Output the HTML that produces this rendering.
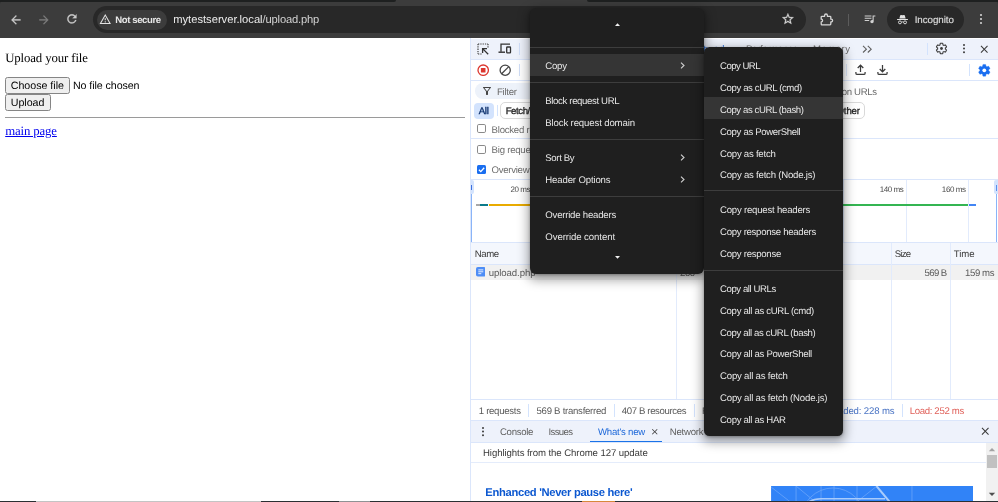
<!DOCTYPE html>
<html lang="en"><head><meta charset="utf-8"><title>upload.php</title>
<style>
html,body{margin:0;padding:0;width:998px;height:502px;overflow:hidden;background:#fff}
#r{position:relative;width:998px;height:502px;overflow:hidden;font-family:'Liberation Sans', sans-serif;text-rendering:geometricPrecision;will-change:transform}
#r div,#r span,#r svg,#r a{position:absolute;white-space:pre;box-sizing:border-box}
</style></head><body><div id="r" style="position:relative">
<div style="left:0px;top:0px;width:998px;height:502px;background:#ffffff;"></div>
<div style="left:0px;top:0px;width:998px;height:38.4px;background:#3c3c3c;"></div>
<div style="left:0px;top:0px;width:396px;height:1.6px;background:#1e2020;border-radius:0 0 2px 0;"></div>
<div style="left:587px;top:0px;width:411px;height:1.6px;background:#1e2020;border-radius:0 0 0 2px;"></div>
<svg style="left:0px;top:0px;" width="4" height="4" viewBox="0 0 4 4"><path d="M0 0H4Q0 0 0 4z" fill="#1e2020"/></svg>
<svg style="left:994px;top:0px;" width="4" height="4" viewBox="0 0 4 4"><path d="M4 0H0Q4 0 4 4z" fill="#1e2020"/></svg>
<div style="left:93px;top:6px;width:713px;height:27px;background:#282828;border-radius:13.5px;"></div>
<div style="left:97px;top:9.5px;width:70px;height:20px;background:#3c3c3c;border-radius:10px;"></div>
<svg style="left:9.299999999999999px;top:12.6px;" width="13.8" height="13.8" viewBox="0 0 24 24"><path d="M20 11H7.83l5.59-5.59L12 4l-8 8 8 8 1.41-1.41L7.83 13H20v-2z" fill="#cbcbcb" stroke="#cbcbcb" stroke-width="0.400"/></svg>
<svg style="left:37.300000000000004px;top:12.6px;" width="13.8" height="13.8" viewBox="0 0 24 24"><path d="M12 4l-1.41 1.41L16.17 11H4v2h12.17l-5.58 5.59L12 20l8-8z" fill="#7d7d7d" stroke="#7d7d7d" stroke-width="0.300"/></svg>
<svg style="left:65.39999999999999px;top:12.4px;" width="13.8" height="13.8" viewBox="0 0 24 24"><path d="M17.65 6.35C16.2 4.9 14.21 4 12 4c-4.42 0-7.99 3.58-7.99 8s3.57 8 7.99 8c3.73 0 6.84-2.55 7.73-6h-2.08c-.82 2.33-3.04 4-5.65 4-3.31 0-6-2.69-6-6s2.69-6 6-6c1.66 0 3.14.69 4.22 1.78L13 11h7V4l-2.35 2.35z" fill="#cbcbcb" stroke="#cbcbcb" stroke-width="0.400"/></svg>
<svg style="left:99.25px;top:12.75px;" width="12.5" height="12.5" viewBox="0 0 24 24"><path d="M12 5.99L19.53 19H4.47L12 5.99M12 2L1 21h22L12 2zm1 14h-2v2h2v-2zm0-6h-2v4h2v-4z" fill="#e3e3e3" /></svg>
<span style="left:115.20px;top:15.00px;font-family:'Liberation Sans', sans-serif;font-size:9.6px;line-height:12px;color:#e8e8e8;font-weight:700;letter-spacing:-0.399px;">Not secure</span>
<span style="left:173.20px;top:13.00px;font-family:'Liberation Sans', sans-serif;font-size:11.2px;line-height:15px;color:#ececec;letter-spacing:-0.008px;">mytestserver.local</span>
<span style="left:262.60px;top:13.00px;font-family:'Liberation Sans', sans-serif;font-size:11.2px;line-height:15px;color:#d2d2d2;letter-spacing:-0.188px;">/upload.php</span>
<svg style="left:781.1px;top:12.4px;" width="13.8" height="13.8" viewBox="0 0 24 24"><path d="M22 9.24l-7.19-.62L12 2 9.19 8.63 2 9.24l5.46 4.73L5.82 21 12 17.27 18.18 21l-1.63-7.03L22 9.24zM12 15.4l-3.76 2.27 1-4.28-3.32-2.88 4.38-.38L12 6.1l1.71 4.04 4.38.38-3.32 2.88 1 4.28L12 15.4z" fill="#d6d6d6" stroke="#d6d6d6" stroke-width="0.500"/></svg>
<svg style="left:820.3px;top:12.6px;" width="14" height="13" viewBox="0 0 14 13"><path d="M2 3.300H4.600V2.400a1.400 1.400 0 0 1 2.800 0V3.300H10a0.800 0.800 0 0 1 0.800 0.800V6.200h0.400a1.400 1.400 0 0 1 0 2.800h-0.400V11.100a0.800 0.800 0 0 1-0.800 0.800H2a0.800 0.800 0 0 1-0.800-0.800V9a1.400 1.400 0 0 0 0-2.800V4.100a0.800 0.800 0 0 1 0.800-0.800z" fill="none" stroke="#d6d6d6" stroke-width="1.300" stroke-linejoin="round"/></svg>
<div style="left:848px;top:14px;width:1px;height:12px;background:#5c5c5c;"></div>
<svg style="left:862.75px;top:12.25px;" width="13.5" height="13.5" viewBox="0 0 24 24"><path d="M15 6H3v2h12V6zm0 4H3v2h12v-2zM3 16h8v-2H3v2zM17 6v8.18c-.31-.11-.65-.18-1-.18-1.66 0-3 1.34-3 3s1.34 3 3 3 3-1.34 3-3V8h3V6h-5z" fill="#d0d0d0" /></svg>
<div style="left:887px;top:6px;width:76.5px;height:27px;background:#282828;border-radius:13.5px;"></div>
<svg style="left:895.5px;top:13px;" width="13" height="12" viewBox="0 0 24 22"><path d="M2 11.2h20v1.700H2zM6.200 10l1.500-5.600c.2-.7.900-1.100 1.600-.9l2.700.8 2.700-.8c.7-.2 1.400.2 1.600.9L17.800 10z" fill="#e3e3e3"/><circle cx="7.300" cy="17.200" r="2.700" fill="none" stroke="#e3e3e3" stroke-width="1.700"/><circle cx="16.700" cy="17.200" r="2.700" fill="none" stroke="#e3e3e3" stroke-width="1.700"/><path d="M10 16.800q2-1.200 4 0" fill="none" stroke="#e3e3e3" stroke-width="1.500"/></svg>
<span style="left:914.70px;top:14.00px;font-family:'Liberation Sans', sans-serif;font-size:9.8px;line-height:13px;color:#dedede;letter-spacing:-0.058px;-webkit-text-stroke:0.15px #dedede;">Incognito</span>
<svg style="left:977.8px;top:12px;" width="6" height="14" viewBox="0 0 6 14"><circle cx="3" cy="3" r="1.1" fill="#d0d0d0"/><circle cx="3" cy="7" r="1.1" fill="#d0d0d0"/><circle cx="3" cy="11" r="1.1" fill="#d0d0d0"/></svg>
<span style="left:5.20px;top:50.00px;font-family:'Liberation Serif', serif;font-size:12.8px;line-height:17px;color:#000;letter-spacing:-0.12px;">Upload your file</span>
<div style="left:5px;top:76.5px;width:65px;height:17px;background:#efefef;border:1px solid #858585;border-radius:2.500px;"></div>
<span style="left:10.70px;top:79.00px;font-family:'Liberation Sans', sans-serif;font-size:10.67px;line-height:14px;color:#000;letter-spacing:-0.001px;">Choose file</span>
<span style="left:73.00px;top:79.00px;font-family:'Liberation Sans', sans-serif;font-size:10.67px;line-height:14px;color:#000;letter-spacing:-0.079px;">No file chosen</span>
<div style="left:5px;top:93.500px;width:45.500px;height:17px;background:#efefef;border:1px solid #858585;border-radius:2.500px;"></div>
<span style="left:10.70px;top:96.00px;font-family:'Liberation Sans', sans-serif;font-size:10.67px;line-height:14px;color:#000;letter-spacing:0.004px;">Upload</span>
<div style="left:5px;top:116.5px;width:460px;height:1.2px;background:#9a9a9a;"></div>
<a style="left:5.20px;top:123.00px;font-family:'Liberation Serif', serif;font-size:12.8px;line-height:17px;color:#0000ee;letter-spacing:-0.144px;text-decoration:underline;">main page</a>
<div style="left:470px;top:38.4px;width:1px;height:463px;background:#dbe6fb;"></div>
<div style="left:471px;top:38.4px;width:527px;height:21.1px;background:#eef2fb;"></div>
<div style="left:470.5px;top:38.4px;width:527.5px;height:1.1px;background:#fdfdff;"></div>
<div style="left:471px;top:59.2px;width:527px;height:1px;background:#dbe6fb;"></div>
<svg style="left:477px;top:42.8px;" width="12" height="12" viewBox="0 0 12 12"><path d="M1 1h10M1 1v10M1 11h4M11 1v4" fill="none" stroke="#444" stroke-width="1.200" stroke-dasharray="1.300 1"/><path d="M11.200 11.200L5.600 5.600M5.600 10V5.600H10" fill="none" stroke="#333" stroke-width="1.300"/></svg>
<svg style="left:497.9px;top:43.3px;" width="14" height="11" viewBox="0 0 14 11"><path d="M3 8.800V1.200h9" fill="none" stroke="#333" stroke-width="1.300"/><path d="M0.500 9.200h6.500" fill="none" stroke="#333" stroke-width="1.400"/><rect x="8.700" y="4" width="3.800" height="5.800" rx="0.600" fill="none" stroke="#333" stroke-width="1.300"/></svg>
<div style="left:519px;top:43px;width:1px;height:12px;background:#d0def8;"></div>
<span style="left:536.00px;top:44.00px;font-family:'Liberation Sans', sans-serif;font-size:9.6px;line-height:12px;color:#6b6b6b;letter-spacing:-0.286px;">Elements</span>
<span style="left:590.00px;top:44.00px;font-family:'Liberation Sans', sans-serif;font-size:9.6px;line-height:12px;color:#6b6b6b;letter-spacing:-0.293px;">Console</span>
<span style="left:640.00px;top:44.00px;font-family:'Liberation Sans', sans-serif;font-size:9.6px;line-height:12px;color:#6b6b6b;letter-spacing:-0.293px;">Sources</span>
<span style="left:691.00px;top:44.00px;font-family:'Liberation Sans', sans-serif;font-size:9.6px;line-height:12px;color:#1a66d9;letter-spacing:0.135px;">Network</span>
<div style="left:685px;top:58px;width:48px;height:1.5px;background:#0b57d0;"></div>
<span style="left:746.00px;top:44.00px;font-family:'Liberation Sans', sans-serif;font-size:9.6px;line-height:12px;color:#6b6b6b;letter-spacing:-0.292px;">Performance</span>
<span style="left:813.00px;top:44.00px;font-family:'Liberation Sans', sans-serif;font-size:9.6px;line-height:12px;color:#6b6b6b;letter-spacing:0.469px;">Memory</span>
<svg style="left:862px;top:45px;" width="11" height="8.4" viewBox="0 0 11 8.400"><path d="M1 0.900l3.400 3.300L1 7.500M5.800 0.900l3.400 3.300-3.400 3.300" fill="none" stroke="#5f5f5f" stroke-width="1.100"/></svg>
<div style="left:927px;top:43px;width:1px;height:12px;background:#d3e3fd;"></div>
<svg style="left:935.2px;top:42.2px;" width="13" height="13" viewBox="0 0 24 24"><path d="M19.14 12.94c.04-.3.06-.61.06-.94 0-.32-.02-.64-.07-.94l2.03-1.58c.18-.14.23-.41.12-.61l-1.92-3.32c-.12-.22-.37-.29-.59-.22l-2.39.96c-.5-.38-1.03-.7-1.62-.94l-.36-2.54c-.04-.24-.24-.41-.48-.41h-3.84c-.24 0-.43.17-.47.41l-.36 2.54c-.59.24-1.13.57-1.62.94l-2.39-.96c-.22-.08-.47 0-.59.22L2.74 8.87c-.12.21-.08.47.12.61l2.03 1.58c-.05.3-.09.63-.09.94s.02.64.07.94l-2.03 1.58c-.18.14-.23.41-.12.61l1.92 3.32c.12.22.37.29.59.22l2.39-.96c.5.38 1.03.7 1.62.94l.36 2.54c.05.24.24.41.48.41h3.84c.24 0 .44-.17.47-.41l.36-2.54c.59-.24 1.13-.56 1.620-.94l2.39.96c.22.08.47 0 .59-.22l1.92-3.32c.12-.22.07-.47-.12-.61l-2.01-1.58z" fill="none" stroke="#3b3b3b" stroke-width="2"/><circle cx="12" cy="12" r="2.600" fill="#3b3b3b"/></svg>
<svg style="left:960.6px;top:42.1px;" width="6" height="13.2" viewBox="0 0 6 13.2"><circle cx="3" cy="3.0" r="1" fill="#3b3b3b"/><circle cx="3" cy="6.6" r="1" fill="#3b3b3b"/><circle cx="3" cy="10.2" r="1" fill="#3b3b3b"/></svg>
<svg style="left:977.55px;top:42.55px;" width="12.5" height="12.5" viewBox="0 0 24 24"><path d="M19 6.41L17.59 5 12 10.59 6.41 5 5 6.41 10.59 12 5 17.59 6.41 19 12 13.41 17.59 19 19 17.59 13.41 12z" fill="#3b3b3b" /></svg>
<div style="left:471px;top:60.2px;width:527px;height:20px;background:#ffffff;"></div>
<div style="left:471px;top:80px;width:527px;height:1px;background:#dbe6fb;"></div>
<svg style="left:477px;top:64px;" width="12.4" height="12.4" viewBox="0 0 12.400 12.400"><circle cx="6.200" cy="6.200" r="5.200" fill="none" stroke="#dc362e" stroke-width="1.300"/><rect x="3.900" y="3.900" width="4.600" height="4.600" rx="0.500" fill="#dc362e"/></svg>
<svg style="left:498.8px;top:64px;" width="12.4" height="12.4" viewBox="0 0 12.400 12.400"><circle cx="6.200" cy="6.200" r="5.100" fill="none" stroke="#444" stroke-width="1.300"/><path d="M2.600 9.800L9.800 2.600" stroke="#444" stroke-width="1.300"/></svg>
<div style="left:519px;top:64px;width:1px;height:12px;background:#d0def8;"></div>
<div style="left:846px;top:64px;width:1px;height:12px;background:#dfe9fc;"></div>
<svg style="left:855.1px;top:64.3px;" width="11" height="11.4" viewBox="0 0 11 11.400"><path d="M5.500 8V1.400M2.700 4L5.500 1.200 8.300 4" fill="none" stroke="#3b3b3b" stroke-width="1.250"/><path d="M0.900 8v1.200q0 1.300 1.300 1.300h6.600q1.300 0 1.300-1.300V8" fill="none" stroke="#3b3b3b" stroke-width="1.250"/></svg>
<svg style="left:877px;top:64.3px;" width="11" height="11.4" viewBox="0 0 11 11.400"><path d="M5.500 1V7.600M2.700 5L5.500 7.800 8.300 5" fill="none" stroke="#3b3b3b" stroke-width="1.250"/><path d="M0.900 8v1.200q0 1.300 1.300 1.300h6.600q1.300 0 1.300-1.300V8" fill="none" stroke="#3b3b3b" stroke-width="1.250"/></svg>
<div style="left:969px;top:64px;width:1px;height:12px;background:#d3e3fd;"></div>
<svg style="left:976.7px;top:63.3px;" width="14.6" height="14.6" viewBox="0 0 24 24"><path d="M19.14 12.94c.04-.3.06-.61.06-.94 0-.32-.02-.64-.07-.94l2.03-1.58c.18-.14.23-.41.12-.61l-1.92-3.32c-.12-.22-.37-.29-.59-.22l-2.39.96c-.5-.38-1.03-.7-1.62-.94l-.36-2.54c-.04-.24-.24-.41-.48-.41h-3.84c-.24 0-.43.17-.47.41l-.36 2.54c-.59.24-1.13.57-1.62.94l-2.39-.96c-.22-.08-.47 0-.59.22L2.74 8.87c-.12.21-.08.47.12.61l2.03 1.58c-.05.3-.09.63-.09.94s.02.64.07.94l-2.03 1.58c-.18.14-.23.41-.12.61l1.92 3.32c.12.22.37.29.59.22l2.39-.96c.5.38 1.03.7 1.62.94l.36 2.54c.05.24.24.41.48.41h3.84c.24 0 .44-.17.47-.41l.36-2.54c.59-.24 1.13-.56 1.620-.94l2.39.96c.22.08.47 0 .59-.22l1.92-3.32c.12-.22.07-.47-.12-.61l-2.01-1.58z" fill="#1a6ef0" stroke="#1a6ef0" stroke-width="0.600"/><circle cx="12" cy="12" r="3.100" fill="#fff"/></svg>
<div style="left:475.3px;top:83.4px;width:240px;height:15.4px;background:#edf2fa;border-radius:7.700px;"></div>
<svg style="left:481.3px;top:85.2px;" width="12" height="12" viewBox="0 0 24 24"><path d="M4.25 5.61C6.27 8.2 10 13 10 13v6c0 .55.45 1 1 1h2c.55 0 1-.45 1-1v-6s3.720-4.800 5.740-7.390c.51-.66.04-1.610-.79-1.610H5.040c-.83 0-1.300.950-.79 1.610zM7.040 6h9.920L12 12.380 7.040 6z" fill="#444" /></svg>
<span style="left:497.00px;top:87.00px;font-family:'Liberation Sans', sans-serif;font-size:9.6px;line-height:12px;color:#6a6a6a;letter-spacing:-0.266px;">Filter</span>
<span style="left:793.18px;top:87.00px;font-family:'Liberation Sans', sans-serif;font-size:9.6px;line-height:12px;color:#6b6b6b;letter-spacing:-0.35px;">Hide extension URLs</span>
<div style="left:474px;top:102.6px;width:19.7px;height:16px;background:#d3e3fd;border-radius:4px;"></div>
<span style="left:478.80px;top:106.00px;font-family:'Liberation Sans', sans-serif;font-size:9.6px;line-height:12px;color:#0b2f6b;letter-spacing:-0.336px;-webkit-text-stroke:0.35px #0b2f6b;">All</span>
<div style="left:497px;top:105px;width:1px;height:11px;background:#d3e3fd;"></div>
<div style="left:500.300px;top:102px;width:364.500px;height:16.600px;background:#fff;border:1px solid #d9d9d9;border-radius:5px;"></div>
<span style="left:505.70px;top:106.00px;font-family:'Liberation Sans', sans-serif;font-size:9.6px;line-height:12px;color:#1f1f1f;letter-spacing:-0.428px;-webkit-text-stroke:0.3px #1f1f1f;">Fetch/XHR</span>
<span style="left:836.50px;top:106.00px;font-family:'Liberation Sans', sans-serif;font-size:9.6px;line-height:12px;color:#1f1f1f;letter-spacing:-0.125px;-webkit-text-stroke:0.3px #1f1f1f;">Other</span>
<div style="left:477.2px;top:124.4px;width:9px;height:9px;background:#fff;border:1px solid #8a8a8a;border-radius:1.800px;"></div>
<span style="left:491.60px;top:125.00px;font-family:'Liberation Sans', sans-serif;font-size:9.6px;line-height:12px;color:#6e6e6e;letter-spacing:-0.242px;">Blocked response cookies</span>
<span style="left:620.00px;top:125.00px;font-family:'Liberation Sans', sans-serif;font-size:9.6px;line-height:12px;color:#6e6e6e;letter-spacing:-0.245px;">Blocked requests</span>
<span style="left:715.00px;top:125.00px;font-family:'Liberation Sans', sans-serif;font-size:9.6px;line-height:12px;color:#6e6e6e;letter-spacing:-0.229px;">3rd-party requests</span>
<div style="left:471px;top:138px;width:527px;height:1px;background:#dbe6fb;"></div>
<div style="left:477.2px;top:144.7px;width:9px;height:9px;background:#fff;border:1px solid #8a8a8a;border-radius:1.800px;"></div>
<span style="left:491.60px;top:145.00px;font-family:'Liberation Sans', sans-serif;font-size:9.6px;line-height:12px;color:#6e6e6e;letter-spacing:-0.238px;">Big request rows</span>
<div style="left:477.2px;top:165px;width:9px;height:9px;background:#1a6ef0;border-radius:1.500px;"></div>
<svg style="left:477.2px;top:165px;" width="9" height="9" viewBox="0 0 9 9"><path d="M1.900 4.700l1.900 1.900 3.400-3.900" fill="none" stroke="#fff" stroke-width="1.300"/></svg>
<span style="left:491.60px;top:165.00px;font-family:'Liberation Sans', sans-serif;font-size:9.6px;line-height:12px;color:#6e6e6e;letter-spacing:-0.286px;">Overview</span>
<div style="left:471px;top:179.3px;width:527px;height:1px;background:#dbe6fb;"></div>
<div style="left:532.4px;top:180px;width:1px;height:62px;background:#e2ebfc;"></div>
<div style="left:594.6px;top:180px;width:1px;height:62px;background:#e2ebfc;"></div>
<div style="left:656.8px;top:180px;width:1px;height:62px;background:#e2ebfc;"></div>
<div style="left:719.0px;top:180px;width:1px;height:62px;background:#e2ebfc;"></div>
<div style="left:781.2px;top:180px;width:1px;height:62px;background:#e2ebfc;"></div>
<div style="left:843.4px;top:180px;width:1px;height:62px;background:#e2ebfc;"></div>
<div style="left:905.6px;top:180px;width:1px;height:62px;background:#e2ebfc;"></div>
<div style="left:967.8px;top:180px;width:1px;height:62px;background:#e2ebfc;"></div>
<span style="left:510.55px;top:185.00px;font-family:'Liberation Sans', sans-serif;font-size:8px;line-height:10px;color:#4a4a4a;letter-spacing:-0.436px;">20 ms</span>
<span style="left:572.75px;top:185.00px;font-family:'Liberation Sans', sans-serif;font-size:8px;line-height:10px;color:#4a4a4a;letter-spacing:-0.436px;">40 ms</span>
<span style="left:634.95px;top:185.00px;font-family:'Liberation Sans', sans-serif;font-size:8px;line-height:10px;color:#4a4a4a;letter-spacing:-0.436px;">60 ms</span>
<span style="left:697.15px;top:185.00px;font-family:'Liberation Sans', sans-serif;font-size:8px;line-height:10px;color:#4a4a4a;letter-spacing:-0.436px;">80 ms</span>
<span style="left:755.26px;top:185.00px;font-family:'Liberation Sans', sans-serif;font-size:8px;line-height:10px;color:#4a4a4a;letter-spacing:-0.42px;">100 ms</span>
<span style="left:817.46px;top:185.00px;font-family:'Liberation Sans', sans-serif;font-size:8px;line-height:10px;color:#4a4a4a;letter-spacing:-0.42px;">120 ms</span>
<span style="left:879.66px;top:185.00px;font-family:'Liberation Sans', sans-serif;font-size:8px;line-height:10px;color:#4a4a4a;letter-spacing:-0.42px;">140 ms</span>
<span style="left:941.86px;top:185.00px;font-family:'Liberation Sans', sans-serif;font-size:8px;line-height:10px;color:#4a4a4a;letter-spacing:-0.42px;">160 ms</span>
<div style="left:476px;top:204.2px;width:3.6px;height:2.3px;background:#a8a8a8;"></div>
<div style="left:480px;top:204.2px;width:8.2px;height:2.3px;background:#0b7a8a;"></div>
<div style="left:488.6px;top:204.2px;width:42px;height:2.3px;background:#e9ab00;"></div>
<div style="left:530px;top:204.4px;width:438.3px;height:2px;background:#34b552;"></div>
<div style="left:968.5px;top:204.4px;width:7.7px;height:2px;background:#4285f4;"></div>
<div style="left:470.8px;top:180.3px;width:3.7px;height:14px;background:#d3e3fd;border-radius:0 2px 2px 0;"></div>
<div style="left:471.4px;top:185px;width:1.1px;height:5px;background:#3b6fe0;"></div>
<div style="left:471px;top:194px;width:1.2px;height:48px;background:#8ab4f8;"></div>
<div style="left:994.3px;top:180.3px;width:3.7px;height:14px;background:#d3e3fd;border-radius:2px 0 0 2px;"></div>
<div style="left:995.6px;top:185px;width:1px;height:5.5px;background:#5b8def;"></div>
<div style="left:996.3px;top:194px;width:1.2px;height:48px;background:#8ab4f8;"></div>
<div style="left:471px;top:242px;width:527px;height:1px;background:#dbe6fb;"></div>
<div style="left:471px;top:242.8px;width:527px;height:21px;background:#f4f7fd;"></div>
<div style="left:471px;top:263.5px;width:527px;height:1px;background:#dbe6fb;"></div>
<span style="left:474.80px;top:249.00px;font-family:'Liberation Sans', sans-serif;font-size:9.6px;line-height:12px;color:#3a3a3a;letter-spacing:-0.465px;">Name</span>
<span style="left:680.00px;top:249.00px;font-family:'Liberation Sans', sans-serif;font-size:9.6px;line-height:12px;color:#3a3a3a;letter-spacing:-0.272px;">Status</span>
<span style="left:725.00px;top:249.00px;font-family:'Liberation Sans', sans-serif;font-size:9.6px;line-height:12px;color:#3a3a3a;letter-spacing:-0.347px;">Type</span>
<span style="left:780.00px;top:249.00px;font-family:'Liberation Sans', sans-serif;font-size:9.6px;line-height:12px;color:#3a3a3a;letter-spacing:-0.197px;">Initiator</span>
<span style="left:894.80px;top:249.00px;font-family:'Liberation Sans', sans-serif;font-size:9.6px;line-height:12px;color:#3a3a3a;letter-spacing:-0.824px;">Size</span>
<span style="left:953.80px;top:249.00px;font-family:'Liberation Sans', sans-serif;font-size:9.6px;line-height:12px;color:#3a3a3a;letter-spacing:-0.09px;">Time</span>
<div style="left:471px;top:264.5px;width:527px;height:15.7px;background:#f1f1f1;"></div>
<svg style="left:475.5px;top:267.4px;" width="9.6" height="9.6" viewBox="0 0 9.600 9.600"><rect x="0" y="0" width="9.600" height="9.600" rx="1.800" fill="#4d8df6"/><path d="M2.300 2.900h5M2.300 4.800h5M2.300 6.700h3" stroke="#e8f0fe" stroke-width="1"/></svg>
<span style="left:488.80px;top:268.00px;font-family:'Liberation Sans', sans-serif;font-size:9.6px;line-height:12px;color:#5a5a5a;letter-spacing:-0.087px;">upload.php</span>
<span style="left:680.00px;top:268.00px;font-family:'Liberation Sans', sans-serif;font-size:9.6px;line-height:12px;color:#5a5a5a;letter-spacing:-0.4px;">200</span>
<span style="left:924.40px;top:268.00px;font-family:'Liberation Sans', sans-serif;font-size:9.6px;line-height:12px;color:#5a5a5a;letter-spacing:-0.57px;">569 B</span>
<span style="left:965.00px;top:268.00px;font-family:'Liberation Sans', sans-serif;font-size:9.6px;line-height:12px;color:#5a5a5a;letter-spacing:-0.394px;">159 ms</span>
<div style="left:676.2px;top:242.8px;width:1px;height:157px;background:#e2ebfc;"></div>
<div style="left:890.9px;top:242.8px;width:1px;height:157px;background:#e2ebfc;"></div>
<div style="left:950.2px;top:242.8px;width:1px;height:157px;background:#e2ebfc;"></div>
<div style="left:471px;top:399.2px;width:527px;height:1px;background:#dbe6fb;"></div>
<div style="left:471px;top:400.2px;width:527px;height:20px;background:#ffffff;"></div>
<span style="left:478.70px;top:406.00px;font-family:'Liberation Sans', sans-serif;font-size:9.6px;line-height:12px;color:#5a5a5a;letter-spacing:-0.279px;">1 requests</span>
<div style="left:528px;top:403.5px;width:1px;height:13px;background:#d3e3fd;"></div>
<span style="left:536.50px;top:406.00px;font-family:'Liberation Sans', sans-serif;font-size:9.6px;line-height:12px;color:#5a5a5a;letter-spacing:-0.265px;">569 B transferred</span>
<div style="left:614.2px;top:403.5px;width:1px;height:13px;background:#d3e3fd;"></div>
<span style="left:621.70px;top:406.00px;font-family:'Liberation Sans', sans-serif;font-size:9.6px;line-height:12px;color:#5a5a5a;letter-spacing:-0.354px;">407 B resources</span>
<div style="left:694.3px;top:403.5px;width:1px;height:13px;background:#d3e3fd;"></div>
<span style="left:702.00px;top:406.00px;font-family:'Liberation Sans', sans-serif;font-size:9.6px;line-height:12px;color:#5a5a5a;letter-spacing:-0.24px;">Finish: 252 ms</span>
<span style="left:773.10px;top:406.00px;font-family:'Liberation Sans', sans-serif;font-size:9.6px;line-height:12px;color:#4a74c4;letter-spacing:-0.143px;">DOMContentLoaded: 228 ms</span>
<div style="left:902px;top:403.5px;width:1px;height:13px;background:#d3e3fd;"></div>
<span style="left:909.70px;top:406.00px;font-family:'Liberation Sans', sans-serif;font-size:9.6px;line-height:12px;color:#e0625b;letter-spacing:-0.331px;">Load: 252 ms</span>
<div style="left:471px;top:420.2px;width:527px;height:22px;background:#eef2fb;"></div>
<div style="left:471px;top:420px;width:527px;height:1px;background:#dbe6fb;"></div>
<div style="left:471px;top:441.8px;width:527px;height:1px;background:#dbe6fb;"></div>
<svg style="left:480.2px;top:424.9px;" width="6" height="13.2" viewBox="0 0 6 13.2"><circle cx="3" cy="3.0" r="1" fill="#3b3b3b"/><circle cx="3" cy="6.6" r="1" fill="#3b3b3b"/><circle cx="3" cy="10.2" r="1" fill="#3b3b3b"/></svg>
<span style="left:500.00px;top:427.00px;font-family:'Liberation Sans', sans-serif;font-size:9.6px;line-height:12px;color:#5f5f5f;letter-spacing:-0.317px;">Console</span>
<span style="left:548.50px;top:427.00px;font-family:'Liberation Sans', sans-serif;font-size:9.6px;line-height:12px;color:#5f5f5f;letter-spacing:-0.647px;">Issues</span>
<span style="left:598.00px;top:427.00px;font-family:'Liberation Sans', sans-serif;font-size:9.6px;line-height:12px;color:#1a66d9;letter-spacing:-0.233px;">What&#x27;s new</span>
<svg style="left:649.75px;top:426.55px;" width="9.5" height="9.5" viewBox="0 0 24 24"><path d="M19 6.41L17.59 5 12 10.59 6.41 5 5 6.41 10.59 12 5 17.59 6.41 19 12 13.41 17.59 19 19 17.59 13.41 12z" fill="#3b3b3b" /></svg>
<div style="left:590px;top:440.7px;width:72px;height:1.6px;background:#1a73e8;"></div>
<span style="left:669.80px;top:427.00px;font-family:'Liberation Sans', sans-serif;font-size:9.6px;line-height:12px;color:#5f5f5f;letter-spacing:-0.238px;">Network conditions</span>
<svg style="left:979.25px;top:425.05px;" width="12.5" height="12.5" viewBox="0 0 24 24"><path d="M19 6.41L17.59 5 12 10.59 6.41 5 5 6.41 10.59 12 5 17.59 6.41 19 12 13.41 17.59 19 19 17.59 13.41 12z" fill="#3b3b3b" /></svg>
<div style="left:471px;top:442.8px;width:514.5px;height:58.7px;background:#ffffff;"></div>
<span style="left:483.00px;top:448.00px;font-family:'Liberation Sans', sans-serif;font-size:9.6px;line-height:12px;color:#3a3a3a;letter-spacing:-0.074px;">Highlights from the Chrome 127 update</span>
<div style="left:471px;top:462px;width:514.5px;height:1px;background:#e4ecfb;"></div>
<span style="left:485.30px;top:486.00px;font-family:'Liberation Sans', sans-serif;font-size:11.2px;line-height:15px;color:#0b57d0;font-weight:700;letter-spacing:-0.303px;">Enhanced &#x27;Never pause here&#x27;</span>
<svg style="left:770.700px;top:486.300px;" width="202.700" height="15.700" viewBox="0 0 202.700 15.700"><rect width="202.700" height="15.700" fill="#3183f7"/><g fill="none" stroke="#6aa5fa" stroke-width="0.800"><path d="M0 1l19 14.700M25 0v15.700M50 0v15.700M63 0v15.700M86 0v15.700M141 0v15.700M25 0L44 15.700M86 15.700L106 0"/><circle cx="62" cy="34" r="32"/></g><path d="M105.500 0l13 15.700" stroke="#a9ccfc" stroke-width="2" fill="none"/><path d="M38 15.700q5-3 12-3h64" stroke="#a9ccfc" stroke-width="1.600" fill="none"/></svg>
<div style="left:985.5px;top:442.8px;width:12.5px;height:58.7px;background:#f1f1f1;"></div>
<svg style="left:987.5px;top:446.5px;" width="8" height="5" viewBox="0 0 8 5"><path d="M0.800 4.300L4 1l3.200 3.300z" fill="#a3a3a3"/></svg>
<div style="left:986.5px;top:455.3px;width:10.5px;height:12.4px;background:#c1c1c1;"></div>
<svg style="left:987.5px;top:492px;" width="8" height="5" viewBox="0 0 8 5"><path d="M0.800 0.700L4 4l3.200-3.300z" fill="#505050"/></svg>
<div style="left:529.6px;top:7.6px;width:174.4px;height:266.2px;background:#1f1f1f;border-radius:6px;box-shadow:0 4px 11px 1.500px rgba(0,0,0,.36),0 1px 3px rgba(0,0,0,.28);"></div>
<svg style="left:614.6px;top:22.6px;" width="5" height="3" viewBox="0 0 5 3"><path d="M0 3L2.500 0.300 5 3z" fill="#f0f0f0"/></svg>
<div style="left:530px;top:46.5px;width:174px;height:1px;background:#3d3d3d;"></div>
<div style="left:530px;top:54px;width:174px;height:22px;background:#353535;"></div>
<span style="left:545.30px;top:61.00px;font-family:'Liberation Sans', sans-serif;font-size:9.6px;line-height:12px;color:#e6e6e6;letter-spacing:-0.235px;">Copy</span>
<div style="left:530px;top:82px;width:174px;height:1px;background:#3d3d3d;"></div>
<span style="left:545.30px;top:96.00px;font-family:'Liberation Sans', sans-serif;font-size:9.6px;line-height:12px;color:#e6e6e6;letter-spacing:-0.355px;">Block request URL</span>
<span style="left:545.30px;top:118.00px;font-family:'Liberation Sans', sans-serif;font-size:9.6px;line-height:12px;color:#e6e6e6;letter-spacing:-0.135px;">Block request domain</span>
<div style="left:530px;top:138.7px;width:174px;height:1px;background:#3d3d3d;"></div>
<span style="left:545.30px;top:153.00px;font-family:'Liberation Sans', sans-serif;font-size:9.6px;line-height:12px;color:#e6e6e6;letter-spacing:-0.361px;">Sort By</span>
<span style="left:545.30px;top:175.00px;font-family:'Liberation Sans', sans-serif;font-size:9.6px;line-height:12px;color:#e6e6e6;letter-spacing:-0.146px;">Header Options</span>
<div style="left:530px;top:196.2px;width:174px;height:1px;background:#3d3d3d;"></div>
<span style="left:545.30px;top:210.00px;font-family:'Liberation Sans', sans-serif;font-size:9.6px;line-height:12px;color:#e6e6e6;letter-spacing:-0.215px;">Override headers</span>
<span style="left:545.30px;top:232.00px;font-family:'Liberation Sans', sans-serif;font-size:9.6px;line-height:12px;color:#e6e6e6;letter-spacing:-0.076px;">Override content</span>
<svg style="left:614.6px;top:255.6px;" width="5" height="3" viewBox="0 0 5 3"><path d="M0 0L2.500 2.700 5 0z" fill="#f0f0f0"/></svg>
<svg style="left:679.7px;top:61.5px;" width="5" height="7" viewBox="0 0 5 7"><path d="M1 0.700L4 3.500 1 6.300" fill="none" stroke="#d0d0d0" stroke-width="1.100"/></svg>
<svg style="left:679.7px;top:153.7px;" width="5" height="7" viewBox="0 0 5 7"><path d="M1 0.700L4 3.500 1 6.300" fill="none" stroke="#d0d0d0" stroke-width="1.100"/></svg>
<svg style="left:679.7px;top:175.5px;" width="5" height="7" viewBox="0 0 5 7"><path d="M1 0.700L4 3.500 1 6.300" fill="none" stroke="#d0d0d0" stroke-width="1.100"/></svg>
<div style="left:704.3px;top:47.4px;width:138.5px;height:389px;background:#1f1f1f;border-radius:5.500px;box-shadow:0 4px 11px 1.500px rgba(0,0,0,.36),0 1px 3px rgba(0,0,0,.28);"></div>
<div style="left:704.3px;top:97.2px;width:138.5px;height:22px;background:#353535;"></div>
<span style="left:720.00px;top:61.00px;font-family:'Liberation Sans', sans-serif;font-size:9.6px;line-height:12px;color:#e6e6e6;letter-spacing:-0.524px;">Copy URL</span>
<span style="left:720.00px;top:83.00px;font-family:'Liberation Sans', sans-serif;font-size:9.6px;line-height:12px;color:#e6e6e6;letter-spacing:-0.387px;">Copy as cURL (cmd)</span>
<span style="left:720.00px;top:105.00px;font-family:'Liberation Sans', sans-serif;font-size:9.6px;line-height:12px;color:#e6e6e6;letter-spacing:-0.414px;">Copy as cURL (bash)</span>
<span style="left:720.00px;top:127.00px;font-family:'Liberation Sans', sans-serif;font-size:9.6px;line-height:12px;color:#e6e6e6;letter-spacing:-0.335px;">Copy as PowerShell</span>
<span style="left:720.00px;top:149.00px;font-family:'Liberation Sans', sans-serif;font-size:9.6px;line-height:12px;color:#e6e6e6;letter-spacing:-0.239px;">Copy as fetch</span>
<span style="left:720.00px;top:170.00px;font-family:'Liberation Sans', sans-serif;font-size:9.6px;line-height:12px;color:#e6e6e6;letter-spacing:-0.22px;">Copy as fetch (Node.js)</span>
<span style="left:720.00px;top:205.00px;font-family:'Liberation Sans', sans-serif;font-size:9.6px;line-height:12px;color:#e6e6e6;letter-spacing:-0.216px;">Copy request headers</span>
<span style="left:720.00px;top:227.00px;font-family:'Liberation Sans', sans-serif;font-size:9.6px;line-height:12px;color:#e6e6e6;letter-spacing:-0.284px;">Copy response headers</span>
<span style="left:720.00px;top:249.00px;font-family:'Liberation Sans', sans-serif;font-size:9.6px;line-height:12px;color:#e6e6e6;letter-spacing:-0.269px;">Copy response</span>
<span style="left:720.00px;top:284.00px;font-family:'Liberation Sans', sans-serif;font-size:9.6px;line-height:12px;color:#e6e6e6;letter-spacing:-0.427px;">Copy all URLs</span>
<span style="left:720.00px;top:306.00px;font-family:'Liberation Sans', sans-serif;font-size:9.6px;line-height:12px;color:#e6e6e6;letter-spacing:-0.321px;">Copy all as cURL (cmd)</span>
<span style="left:720.00px;top:328.00px;font-family:'Liberation Sans', sans-serif;font-size:9.6px;line-height:12px;color:#e6e6e6;letter-spacing:-0.356px;">Copy all as cURL (bash)</span>
<span style="left:720.00px;top:349.00px;font-family:'Liberation Sans', sans-serif;font-size:9.6px;line-height:12px;color:#e6e6e6;letter-spacing:-0.307px;">Copy all as PowerShell</span>
<span style="left:720.00px;top:371.00px;font-family:'Liberation Sans', sans-serif;font-size:9.6px;line-height:12px;color:#e6e6e6;letter-spacing:-0.19px;">Copy all as fetch</span>
<span style="left:720.00px;top:393.00px;font-family:'Liberation Sans', sans-serif;font-size:9.6px;line-height:12px;color:#e6e6e6;letter-spacing:-0.193px;">Copy all as fetch (Node.js)</span>
<span style="left:720.00px;top:415.00px;font-family:'Liberation Sans', sans-serif;font-size:9.6px;line-height:12px;color:#e6e6e6;letter-spacing:-0.314px;">Copy all as HAR</span>
<div style="left:704.3px;top:190.2px;width:138.5px;height:1px;background:#3d3d3d;"></div>
<div style="left:704.3px;top:269.7px;width:138.5px;height:1px;background:#3d3d3d;"></div>
<div style="left:0px;top:500.6px;width:998px;height:1.4px;background:#2b2f33;"></div>
<div style="left:36px;top:500.6px;width:225px;height:1.4px;background:#c4c4c4;"></div>
<div style="left:338.5px;top:500.6px;width:31.5px;height:1.4px;background:#8f9294;"></div>
<div style="left:582px;top:500.6px;width:32.6px;height:1.4px;background:#d8883a;"></div>
</div></body></html>
